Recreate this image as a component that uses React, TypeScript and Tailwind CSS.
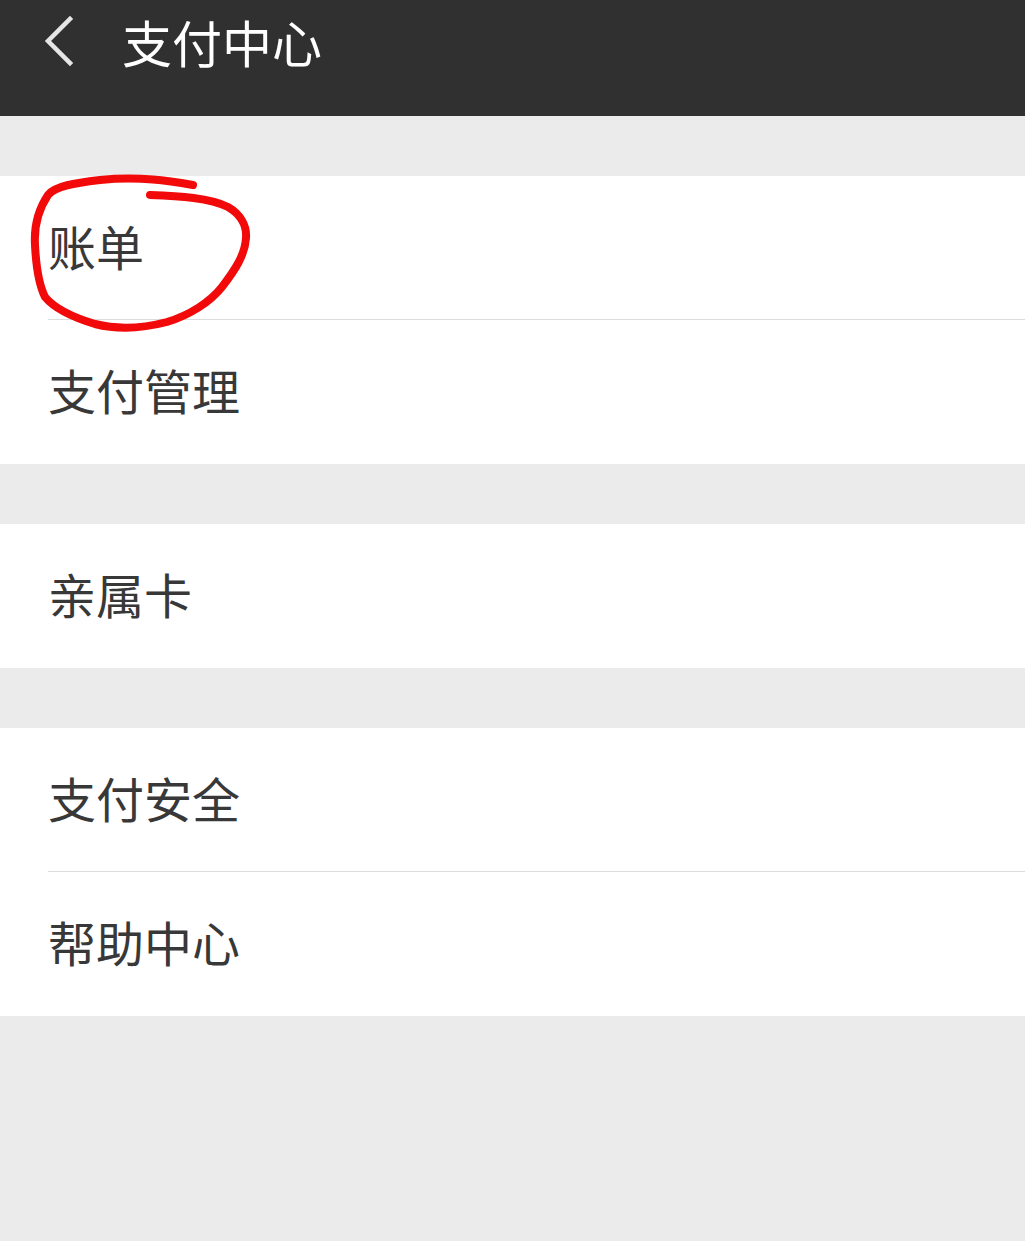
const font = { fontFamily: '"Noto Sans CJK SC", "Noto Sans", sans-serif' };

function Row({ label, divider }: { label: string; divider?: boolean }) {
  return (
    <div className="relative flex h-[144px] items-center bg-white pb-[6px] pl-[48px]">
      <span className="text-[48px] leading-none text-[#383838]">{label}</span>
      {divider && <div className="absolute bottom-0 left-[48px] right-0 h-px bg-[#dcdcdc]" />}
    </div>
  );
}

export default function App() {
  return (
    <div className="relative min-h-[1241px] w-full bg-[#ebebeb]" style={font}>
      {/* Header */}
      <div className="flex h-[116px] items-start bg-[#303030] pt-[14px]">
        <div className="flex h-[54px] items-center pl-[40px]">
          <svg width="36" height="52" viewBox="0 0 36 52" fill="none">
            <path d="M30 4 L8 26 L30 48" stroke="#e6e6e6" strokeWidth="4.5" strokeLinecap="square" />
          </svg>
          <span className="ml-[46px] text-[50px] leading-none text-white">支付中心</span>
        </div>
      </div>

      <div className="h-[60px]" />
      <Row label="账单" divider />
      <Row label="支付管理" />
      <div className="h-[60px]" />
      <Row label="亲属卡" />
      <div className="h-[60px]" />
      <Row label="支付安全" divider />
      <Row label="帮助中心" />

      {/* red annotation */}
      <svg className="pointer-events-none absolute left-0 top-0" width="300" height="360" viewBox="0 0 300 360" fill="none">
        <path
          d="M193 185 C170 181 140 176 100 180 C75 183 55 186 48 195 C38 210 34 228 35 245 C36 265 38 283 45 297 C55 309 75 318 95 324 C115 329 140 329 167 322 C190 315 210 302 222 287 C235 270 245 255 246 238 C247 225 240 214 228 207 C210 198 180 196 150 195"
          stroke="#f20a0a"
          strokeWidth="8"
          strokeLinecap="round"
          strokeLinejoin="round"
        />
      </svg>
    </div>
  );
}
